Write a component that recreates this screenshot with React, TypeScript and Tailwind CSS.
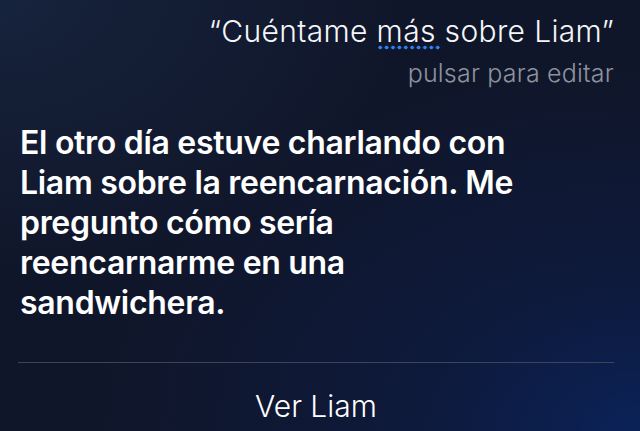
import React from 'react';

export default function App() {
  return (
    <div
      className="relative w-[640px] h-[431px] overflow-hidden bg-[#10162a] text-white"
      style={{ fontFamily: 'Inter, "Liberation Sans", sans-serif' }}
    >
      {/* background glow */}
      <div className="absolute inset-0 bg-[radial-gradient(ellipse_at_0%_0%,#16233c_0%,rgba(16,22,42,0)_45%)]" />
      <div className="absolute inset-0 bg-[radial-gradient(ellipse_at_100%_100%,#0b2258_0%,rgba(12,28,70,0.6)_25%,rgba(16,22,42,0)_60%)]" />

      <div className="relative flex flex-col h-full pl-[18px] pr-[26px]">
        {/* query */}
        <div className="flex flex-col items-end pt-[13px]">
          <div className="text-[30px] font-light leading-[36px] tracking-[0.35px] text-[#f5f6f8] whitespace-nowrap">
            “Cuéntame{' '}
            <span className="relative">
              más
              <span className="absolute left-0 right-[-6px] top-[32px] h-[5px] bg-[radial-gradient(circle,#2d82f5_1.7px,transparent_2.1px)] bg-[length:6.4px_5px]" />
            </span>{' '}
            sobre Liam”
          </div>
          <div className="text-[25px] font-light leading-[30px] mt-[9px] tracking-[0.2px] text-[#8d929e] whitespace-nowrap">
            pulsar para editar
          </div>
        </div>

        {/* answer */}
        <div className="mt-[35px] pl-[2px] text-[32px] font-semibold leading-[40px] tracking-[-0.3px] text-white whitespace-nowrap">
          El otro día estuve charlando con
          <br />
          Liam sobre la reencarnación. Me
          <br />
          pregunto cómo sería
          <br />
          reencarnarme en una
          <br />
          sandwichera.
        </div>

        <div className="mt-[39px] h-px bg-[#3b4459]" />

        <div className="flex justify-center pt-[25px]">
          <span className="text-[30px] font-light leading-[36px] text-white">Ver Liam</span>
        </div>
      </div>
    </div>
  );
}
